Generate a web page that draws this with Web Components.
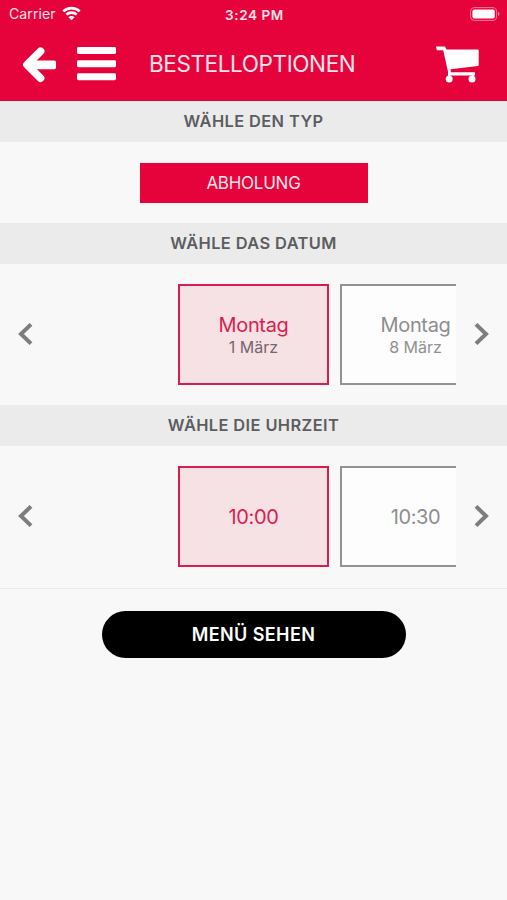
<!DOCTYPE html>
<html lang="de">
<head>
<meta charset="utf-8">
<title>Bestelloptionen</title>
<style>
  html, body {
    margin: 0;
    height: 100%;
    overflow: hidden;
    background: #f8f8f8;
    font-family: Inter, "Liberation Sans", sans-serif;
  }
</style>
</head>
<body>
<order-options></order-options>

<script>
function attach(element, html) {
  const template = document.createElement('template');
  template.innerHTML = html;
  element.attachShadow({ mode: 'open' });
  element.shadowRoot.appendChild(template.content.cloneNode(true));
}

class StatusBar extends HTMLElement {
  constructor() {
    super();
    attach(this, `
    <style>
      :host {
        display: grid;
        grid-template-columns: 1fr auto 1fr;
        align-items: center;
        height: 27px;
        padding: 0 7px 0 9px;
        color: #ffe3ea;
        font-size: 14px;
        line-height: 27px;
      }
      .carrier { display: flex; align-items: center; gap: 6px; padding-bottom: 2px; letter-spacing: 0.1px; }
      .time { padding-top: 1px; font-size: 13.5px; font-weight: 600; letter-spacing: 0.6px; }
      .battery { justify-self: end; margin-bottom: 1px; }
      svg { display: block; }
    </style>
    <div class="carrier"><span>Carrier</span>
      <svg width="19" height="15" viewBox="0 0 20 15" fill="none" stroke="#fff" stroke-width="2.8">
        <path d="M1.4 5.3C6.2.7 13.8.7 18.6 5.3"/>
        <path d="M4.6 8.7c3-2.8 7.8-2.8 10.8 0"/>
        <path d="M10 14.6 6.7 11.4c1.8-1.6 4.8-1.6 6.6 0z" fill="#fff" stroke="none"/>
      </svg>
    </div>
    <span class="time">3:24 PM</span>
    <svg class="battery" width="30" height="14" viewBox="0 0 30 14">
      <rect x=".6" y=".6" width="26" height="12.8" rx="3.6" fill="none" stroke="#f8799a" stroke-width="1"/>
      <rect x="2.4" y="2.4" width="22.4" height="9.2" rx="2" fill="#fff"/>
      <path d="M28 4.8c2 .6 2 3.8 0 4.4z" fill="#f8799a"/>
    </svg>
    `);
  }
}
customElements.define('status-bar', StatusBar);

class NavBar extends HTMLElement {
  constructor() {
    super();
    attach(this, `
    <style>
      :host {
        display: flex;
        align-items: center;
        height: 74px;
        padding: 0 28px 0 22px;
        color: #ffe3ea;
      }
      svg { display: block; flex: none; }
      .menu { margin-left: 20px; }
      h1 {
        flex: 1;
        margin: 0 0 0 33px;
        font-size: 22.5px;
        font-weight: 400;
        letter-spacing: -0.4px;
        line-height: 70px;
        white-space: nowrap;
      }
    </style>
    <svg width="35" height="37" viewBox="0 0 35 37" fill="none" stroke="#fff" stroke-linejoin="round" stroke-linecap="round">
      <path d="M18.6 5.2 5 18.8l13.6 13.4" stroke-width="7.6"/>
      <rect x="7" y="14.4" width="27" height="8.8" rx="1.6" fill="#fff" stroke="none"/>
      <path d="M5 18.8 14 10v17.6z" fill="#fff" stroke="none"/>
    </svg>
    <svg class="menu" width="39" height="34" viewBox="0 0 39 34" fill="#fff">
      <rect y="0" width="39" height="7" rx="1.4"/>
      <rect y="13.2" width="39" height="7" rx="1.4"/>
      <rect y="26.2" width="39" height="7" rx="1.4"/>
    </svg>
    <h1><slot></slot></h1>
    <svg width="43" height="37" viewBox="0 0 43 37" fill="#fff">
      <path d="M0 .6h9l1.5 2.9H41.8q.9 0 .9.9V19q0 .8-.9 1L14.6 23.2l.2 3.1H39v3.2h-1.2v3h-2v-3H14v3h-2v-6.8L7.2 4.2H.8z"/>
      <circle cx="13.2" cy="33" r="3.5"/>
      <circle cx="36" cy="33" r="3.5"/>
    </svg>
    `);
  }
}
customElements.define('nav-bar', NavBar);

class OptionSection extends HTMLElement {
  constructor() {
    super();
    attach(this, `
    <style>
      :host { display: block; }
      h2 {
        margin: 0;
        background: #ebebeb;
        color: #5c5d60;
        font-size: 16.4px;
        font-weight: 600;
        line-height: 41px;
        height: 41px;
        text-align: center;
        letter-spacing: 0.4px;
      }
      .body { display: flex; justify-content: center; }
    </style>
    <h2><slot name="title"></slot></h2>
    <div class="body"><slot></slot></div>
    `);
  }
}
customElements.define('option-section', OptionSection);

class TypeButton extends HTMLElement {
  constructor() {
    super();
    attach(this, `
    <style>
      :host { display: block; padding: 21px 0 20px; }
      button {
        display: block;
        width: 228px;
        height: 40px;
        padding: 0;
        border: 0;
        background: #e6033c;
        color: #ffe3ea;
        font: 400 17px/40px Inter, sans-serif;
        letter-spacing: -0.25px;
      }
    </style>
    <button><slot></slot></button>
    `);
  }
}
customElements.define('type-button', TypeButton);

class OptionCarousel extends HTMLElement {
  constructor() {
    super();
    attach(this, `
    <style>
      :host {
        display: grid;
        grid-template-columns: 51px 1fr 51px;
        align-items: center;
        width: 100%;
        padding: 20px 0;
      }
      .track {
        display: flex;
        gap: 11px;
        overflow: hidden;
        padding-left: 127px;
      }
      svg { display: block; justify-self: center; padding-bottom: 1px; }
    </style>
    <svg width="15" height="22" viewBox="0 0 15 22" fill="none" stroke="#7d7d7d" stroke-width="4"><path d="M13 1.4 3 11l10 9.6"/></svg>
    <div class="track"><slot></slot></div>
    <svg width="15" height="22" viewBox="0 0 15 22" fill="none" stroke="#7d7d7d" stroke-width="4"><path d="M2 1.4 12 11 2 20.6"/></svg>
    `);
  }
}
customElements.define('option-carousel', OptionCarousel);

class OptionCard extends HTMLElement {
  constructor() {
    super();
    attach(this, `
    <style>
      :host {
        display: flex;
        flex: none;
        flex-direction: column;
        align-items: center;
        justify-content: center;
        box-sizing: border-box;
        width: 151px;
        height: 101px;
        border: 2px solid #929292;
        background: #fdfdfd;
        color: #8e8e8e;
        font-size: 20px;
        letter-spacing: -0.35px;
        line-height: 24px;
      }
      :host([selected]) {
        border-color: #d91e4f;
        background: #f6e1e5;
        color: #d91e4f;
      }
      ::slotted(small) {
        font-size: 16px;
        line-height: 20px;
        letter-spacing: 0;
        color: #919191;
      }
      :host([selected]) ::slotted(small) { color: #75666b; }
    </style>
    <slot></slot>
    <slot name="date"></slot>
    `);
  }
}
customElements.define('option-card', OptionCard);

class MenuButton extends HTMLElement {
  constructor() {
    super();
    attach(this, `
    <style>
      :host {
        display: flex;
        justify-content: center;
        padding-top: 22px;
        border-top: 1px solid #ebebeb;
      }
      button {
        width: 304px;
        height: 47px;
        padding: 0;
        border: 0;
        border-radius: 24px;
        background: #000;
        color: #fff;
        font: 600 18px/47px Inter, sans-serif;
        letter-spacing: 0.4px;
      }
    </style>
    <button><slot></slot></button>
    `);
  }
}
customElements.define('menu-button', MenuButton);

class OrderOptions extends HTMLElement {
  constructor() {
    super();
    attach(this, `
    <style>
      :host { display: block; }
      header { height: 101px; background: #e6033c; }
      .time { padding-bottom: 1px; }
    </style>
    <header>
      <status-bar></status-bar>
      <nav-bar>BESTELLOPTIONEN</nav-bar>
    </header>
    <option-section>
      <span slot="title">WÄHLE DEN TYP</span>
      <type-button>ABHOLUNG</type-button>
    </option-section>
    <option-section>
      <span slot="title">WÄHLE DAS DATUM</span>
      <option-carousel>
        <option-card selected>Montag<small slot="date">1 März</small></option-card>
        <option-card>Montag<small slot="date">8 März</small></option-card>
      </option-carousel>
    </option-section>
    <option-section class="time">
      <span slot="title">WÄHLE DIE UHRZEIT</span>
      <option-carousel>
        <option-card selected>10:00</option-card>
        <option-card>10:30</option-card>
      </option-carousel>
    </option-section>
    <menu-button>MENÜ SEHEN</menu-button>
    `);
  }
}
customElements.define('order-options', OrderOptions);
</script>
</body>
</html>
